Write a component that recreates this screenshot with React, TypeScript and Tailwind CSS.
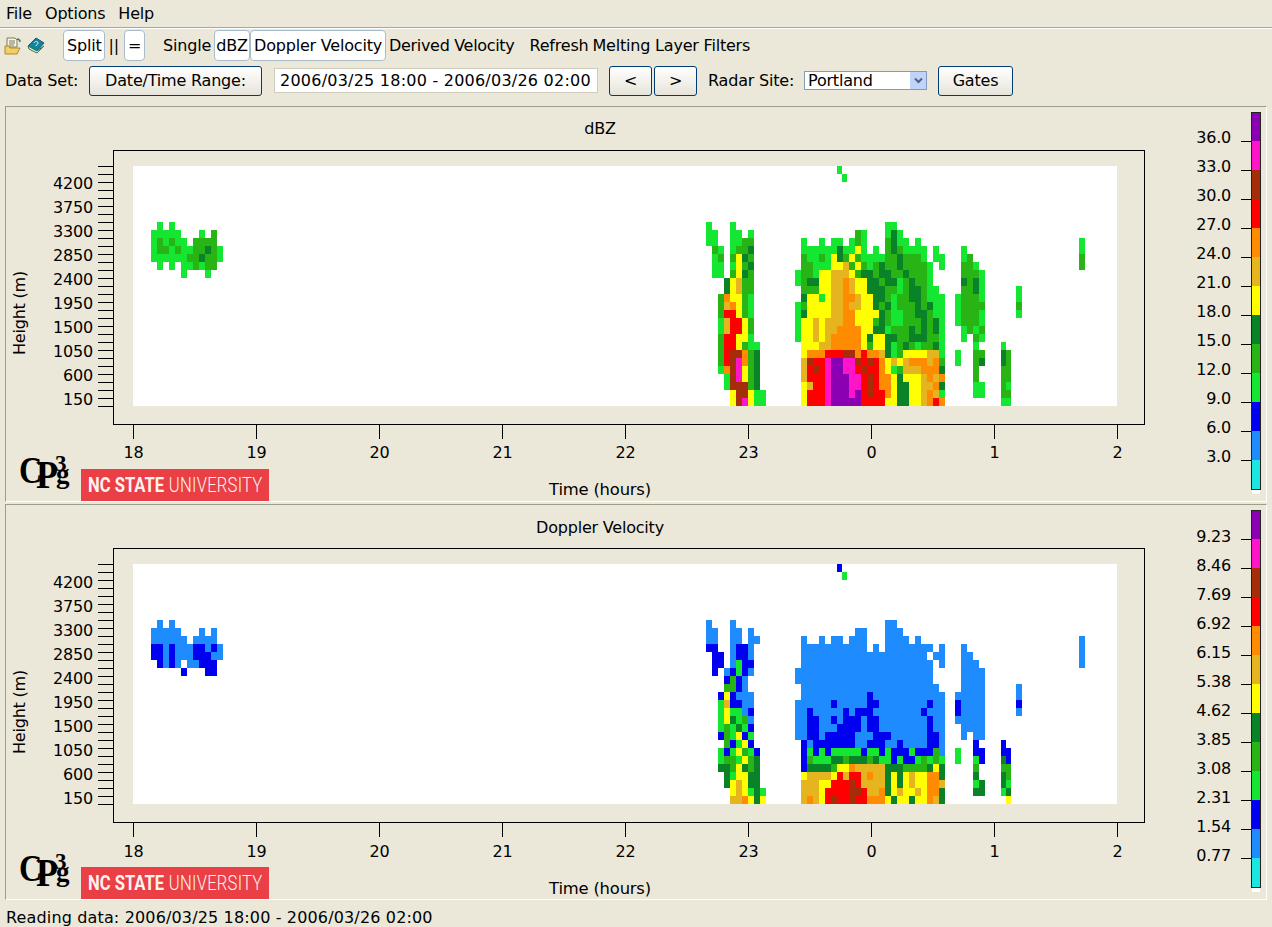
import React from "react";

const COLORS: Record<string, string> = {
  c: "#1ce6e0", b: "#1e8cff", B: "#0000f0", g: "#14e632", m: "#28b414", d: "#0a8228",
  y: "#ffff00", o: "#e6b41e", O: "#ff8c00", r: "#ff0000", R: "#a52d0a", p: "#ff14c8", v: "#8c00b4",
};
const BAR = ["v", "p", "R", "r", "O", "o", "y", "d", "m", "g", "B", "b", "c"];

type Cluster = { x: number; w: number; r: number; rows: string[] };

const DBZ: Cluster[] = [
  { x: 837, w: 5, r: 0, rows: ["g.", ".g"] },
  { x: 151, w: 6, r: 7, rows: [".g.g........", "ggggg...g.m.", "gmgmgg.mmmm.", "gmmgmggmmdmg", "ggggggmmdmmg", ".g.g.ggmgmm.", ".....g...g"] },
  { x: 706, w: 6, r: 7, rows: ["g...g.....", "gg..gg.g..", "gg..ggmm..", ".mg.gmmd", ".gm.mydm", ".gg.gymd", ".gg.mydm", "...dyomm", "...dyomm", "..mOyymg", "..moOymg", "..mrrymg", "..gorrym", "..gorrym", "..mrryyg", "..mrrymgg", "..mrRROmd", "..mrRpOmd", "..gORpymd", "...gRpymd", "...gRRRmd", "....yRRygg", "....yRpygg"] },
  { x: 795, w: 6, r: 7, rows: [
    "...............gg",
    "..........mg...gdg",
    ".g..g.gg.gmg...mdgg.g",
    ".ggggggdggyg.g.mdmgggg.g",
    ".mggmgydmymggggmmdmmmg.gg",
    ".mmgggyyomymgmdmmdmmmmg.g",
    "gmmgyyoooymddmddmmdmmmg",
    "gmddyyooOoyyddmddgmdmmg",
    ".mmmyyooOoyydddmmgmddmgg",
    ".dyygyooOOoyyddmgmmddmggg",
    "gmyyyyooOooyydmdgmmmdmdgg",
    "gdyyyyooOOyyyydmggmmddmgg",
    "gyyoyoooOOyyymdmggmmmdmdg",
    "gyyoyooOOOOyyddgmmmdmdmdg",
    "gyyoyoOOOOOydyyddmmdddmmg",
    ".yyyooOOOOOymyydgmdmgmmdg",
    ".yOOOrrrRROrOOodgmyyyyoog",
    ".oRrrpvvppRrRrOyoyoOOOoOm",
    ".orRrpvvpprRrrOygmoooOOOd",
    ".orrrpvvvpprRrOOydyyyoOoO",
    ".yorrpvvvpprRrOOyddyyooOd",
    ".yrrrpvvvpvrRrrOyddyyoOog",
    ".yrrrpvvvvvrrrryyddyyoOrO",
  ] },
  { x: 955, w: 6, r: 10, rows: [".g...", ".gm..", ".mmg.", ".mmmg", ".dmdg", ".mmdg", "gmmmg", "gmmmm", "gmmmg", "gmmmg", ".gmgm", ".g.mg", "...g.", "g..mm", "g..md", "...m.", "...m.", "...gg", "...gg"] },
  { x: 1001, w: 5, r: 22, rows: ["g.", "dm", "dm", "mm", "mm", "mg", "mm", "gg"] },
  { x: 1016, w: 6, r: 15, rows: ["g", "g", "m", "g"] },
  { x: 1079, w: 6, r: 9, rows: ["g", "g", "m", "m"] },
];

const VEL: Cluster[] = [
  { x: 837, w: 5, r: 0, rows: ["B.", ".g"] },
  { x: 151, w: 6, r: 7, rows: [".b.b........", "bbbbb...b.b.", "bbbbbb.bbbb.", "BBbBbbbBBbBb", "BBbBbbbBBBbb", ".BbBb.bbBBB.", ".....B...BB."] },
  { x: 706, w: 6, r: 7, rows: ["b...b.....", "bb..bb.b..", "bb..bb.bb.", "BB..bBBb", ".BB.bBBb", ".BB.bgBB", ".B.bBgBb", "...BmBb", "...mmBb", "..ByBbbb", "..goBBbb", "..gyggbB", "..gydgmb", "..gmgdgB", "..BmgyBg", "...mBgyB", "..gBgymgB", "..gmmgymd", "..ddmydmd", "...dgyydd", "...dyoydd", "....yoygdg", "....ooOydy"] },
  { x: 795, w: 6, r: 7, rows: [
    "...............bb",
    "..........bb...bbb",
    ".b..b.bb.bbb...bbbb.b",
    ".bbbbbbbbbbb.b.bbbbbbbb.b",
    ".bbbbbbbbbbbbbbbbbbbbb.bb",
    ".bbbbbbbbbbbbbbbbbbbbbb.b",
    "bbbbbbbbbbbbbbbbbbbbbbb",
    "bbbbbbbbbbbbbbbbbbbbbbb",
    ".bbbbbbbbbbbbbbbbbbbbbbb",
    ".bbbbbbbbbbbBbbbbbbbbbbbb",
    "bbbbbbBbbbbbBBbbbbbbbbBbb",
    "bbBbbbbbBbBBBbbbbbbbbBbbb",
    "bbBBbbBbBBBbBBbbbbbbbbBbb",
    "bbBBbbbBBBBbBBbbbbbbbbBbb",
    "bbBBbBBBBBbbbBBBbbbbbbBBb",
    ".BbBBBBBBBbbBBBbbBbbbbBBb",
    ".BgBgBgggggBggBgBBBgBBBmb",
    ".BmgggddmdddmdggBgBBgmgmg",
    ".BddddmyyOooooodddmmmmdyd",
    ".yooooyrorroOoodydyoyyOOd",
    ".oooyyrrrRroooodydyoyyOOo",
    ".oooyrrrrRRrooOdyoyyoyOOd",
    ".oOoyrRrrRrrOOOydyydyyOod",
  ] },
  { x: 955, w: 6, r: 10, rows: [".b...", ".bb..", ".bbb.", ".bbbb", ".bbbb", ".bbbb", "bbbbb", "Bbbbb", "Bbbbb", "bbbbb", ".bbbb", ".b.bb", "...B.", "g..BB", "g..gB", "...m.", "...d.", "...gd", "...dd"] },
  { x: 1001, w: 5, r: 22, rows: ["B.", "BB", "dB", "mm", "dm", "dg", "gd", ".y"] },
  { x: 1016, w: 6, r: 15, rows: ["b", "b", "B", "b"] },
  { x: 1079, w: 6, r: 9, rows: ["b", "b", "b", "b"] },
];

const HOURS = ["18", "19", "20", "21", "22", "23", "0", "1", "2"];
const HEIGHTS = ["4200", "3750", "3300", "2850", "2400", "1950", "1500", "1050", "600", "150"];
const FONT = "'DejaVu Sans', sans-serif";

function Radar({ clusters }: { clusters: Cluster[] }) {
  const cells: React.ReactNode[] = [];
  clusters.forEach((c, ci) =>
    c.rows.forEach((row, ri) => {
      let i = 0;
      while (i < row.length) {
        const ch = row[i];
        let j = i;
        while (j < row.length && row[j] === ch) j++;
        if (ch !== ".") {
          cells.push(
            <rect key={`${ci}-${ri}-${i}`} x={c.x + i * c.w} y={166 + (c.r + ri) * 8} width={(j - i) * c.w} height={8} fill={COLORS[ch]} />
          );
        }
        i = j;
      }
    })
  );
  return <g shapeRendering="crispEdges">{cells}</g>;
}

function Chart({ title, clusters, labels, dy }: { title: string; clusters: Cluster[]; labels: string[]; dy: number }) {
  const yTicks = Array.from({ length: 31 }, (_, k) => 166 + k * 8);
  return (
    <svg width={1260} height={394} viewBox="6 107 1260 394" className="block" fontFamily={FONT} fontSize={16} fill="#000">
      <text x={600} y={134 + dy} textAnchor="middle" fontSize={16}>{title}</text>
      <rect x={113.5} y={150.5} width={1031} height={274} fill="none" stroke="#000" />
      <rect x={133} y={166} width={984} height={240} fill="#fff" />
      <Radar clusters={clusters} />
      <g stroke="#000" shapeRendering="crispEdges">
        {yTicks.map((y) => <line key={y} x1={98} x2={113} y1={y + 0.5} y2={y + 0.5} />)}
        {HOURS.map((_, i) => <line key={i} x1={133.5 + i * 123} x2={133.5 + i * 123} y1={424} y2={439} />)}
        {labels.map((_, i) => <line key={i} x1={1241} x2={1252} y1={141.5 + i * 29} y2={141.5 + i * 29} />)}
      </g>
      {HEIGHTS.map((h, i) => <text key={h} x={93} y={188.5 + dy + i * 24} textAnchor="end">{h}</text>)}
      {HOURS.map((h, i) => <text key={h} x={133.5 + i * 123} y={458 + dy} textAnchor="middle">{h}</text>)}
      <text x={600} y={495 + dy} textAnchor="middle" fontSize={16.4}>Time (hours)</text>
      <text transform={`translate(25 ${313 + dy}) rotate(-90)`} textAnchor="middle" fontSize={16}>Height (m)</text>
      {labels.map((l, i) => <text key={l} x={1231} y={143 + dy + i * 29} textAnchor="end">{l}</text>)}
      <g shapeRendering="crispEdges">
        {BAR.map((k, i) => <rect key={k} x={1251} y={112 + i * 29} width={10} height={29} fill={COLORS[k]} />)}
        <rect x={1251.5} y={112.5} width={9} height={377} fill="none" stroke="#222" />
        <rect x={1252} y={490} width={8} height={4} fill="#fff" />
      </g>
    </svg>
  );
}

function Logos() {
  return (
    <div className="absolute left-[13px] top-[358px] flex items-end gap-[11px]">
      <div className="relative h-[36px] w-[51px] font-['Liberation_Serif',serif] font-bold text-black">
        <span className="absolute left-0 top-[-14px] w-[18px] origin-left scale-x-[0.85] text-[38px] leading-[38px]">C</span>
        <span className="absolute left-[17px] top-[-10px] origin-left scale-x-[0.9] text-[40px] leading-[40px]">P</span>
        <span className="absolute left-[36px] top-[-5px] text-[23px] leading-[8px]">3</span>
        <span className="absolute left-[37px] top-[3px] text-[27px] leading-[12px]">g</span>
      </div>
      <div className="flex h-[32px] w-[188px] items-center overflow-hidden bg-[#ea3f45] pl-[7px] text-[#fff3f0]">
        <div className="flex origin-left scale-x-[0.79] whitespace-nowrap font-['Roboto',sans-serif] text-[21px] tracking-normal leading-[32px]">
          <span className="font-bold">NC STATE</span>
          <span className="ml-[6px] font-light tracking-[0.3px]">UNIVERSITY</span>
        </div>
      </div>
    </div>
  );
}

function Panel({ title, clusters, labels, dy }: { title: string; clusters: Cluster[]; labels: string[]; dy: number }) {
  return (
    <section className="relative mx-[5px] h-[396px] w-[1262px] border border-[#9d9d8c] border-b-white border-r-white">
      <Chart title={title} clusters={clusters} labels={labels} dy={dy} />
      <Logos />
    </section>
  );
}

function Toggle({ children, on, w }: { children: React.ReactNode; on?: boolean; w?: string }) {
  const base = "flex h-[31px] items-center justify-center px-[3px]";
  return (
    <span className={`${base} ${on ? "rounded-[4px] border border-[#a9bccb] bg-white" : ""} ${w ?? ""}`}>
      {children}
    </span>
  );
}

function Btn({ children, w }: { children: React.ReactNode; w: string }) {
  return (
    <button className={`flex h-[30px] items-center justify-center rounded-[3px] border border-[#003c74] bg-gradient-to-b from-white to-[#e6e4da] ${w}`}>
      {children}
    </button>
  );
}

export default function App() {
  return (
    <div className="h-[927px] w-[1272px] overflow-hidden bg-[#ebe8d9] font-['DejaVu_Sans',sans-serif] text-[16px] tracking-[-0.2px] text-black">
      <nav className="flex h-[28px] items-center gap-[13px] border-b border-[#a8a898] pl-[6px] shadow-[0_1px_0_#fff]">
        <span>File</span><span>Options</span><span>Help</span>
      </nav>
      <div className="flex h-[33px] items-center pl-[4px] pt-[2px]">
        <svg width={18} height={18} viewBox="0 0 18 18" className="mt-[1px]">
          <path d="M3 1h8l2 2v7H3z" fill="#f4f4e8" stroke="#7c7a58" strokeWidth="1" />
          <path d="M5 4h6M5 6h6M5 8h5" stroke="#7c7a58" strokeWidth="1" />
          <path d="M13 2c2 0 3 1 3 3" fill="none" stroke="#4f7a4a" strokeWidth="1.5" />
          <path d="M1 9h4l1 2h10l-3 6H1z" fill="#f5cf63" stroke="#a78a30" strokeWidth="1" />
        </svg>
        <svg width={18} height={18} viewBox="0 0 18 18" className="ml-[5px]">
          <path d="M1 9 9 1l8 5-7 8z" fill="#12839e" stroke="#0b5d70" strokeWidth="1" />
          <path d="M1 9l1 3 8 4 7-7-7 5z" fill="#e8f0d0" stroke="#2c7a5a" strokeWidth="1" />
          <path d="M7 6c1-2 4-2 4 0s-2 1-2 3" fill="none" stroke="#dff4f4" strokeWidth="1" />
        </svg>
        <div className="ml-[18px] flex items-center">
          <Toggle on>Split</Toggle>
          <span className="ml-[1px] px-[2px]">||</span>
          <span className="ml-[3px]"><Toggle on>=</Toggle></span>
          <span className="ml-[15px]"><Toggle>Single</Toggle></span>
          <Toggle on w="w-[36px] px-0">dBZ</Toggle>
          <Toggle on>Doppler Velocity</Toggle>
          <span className="tracking-[-0.32px]"><Toggle>Derived Velocity</Toggle></span>
          <span className="ml-[9px]"><Toggle>Refresh</Toggle></span>
          <span className="-ml-[2px]"><Toggle>Melting Layer Filters</Toggle></span>
        </div>
      </div>
      <div className="flex h-[36px] items-center pl-[5px] pt-[3px]">
        <span className="w-[84px]">Data Set:</span>
        <Btn w="w-[173px]">Date/Time Range:</Btn>
        <span className="ml-[12px] flex h-[25px] w-[324px] items-center border border-[#cfccbc] bg-white pl-[5px] tracking-[0.23px]">2006/03/25 18:00 - 2006/03/26 02:00</span>
        <span className="ml-[11px]"><Btn w="w-[43px]">&lt;</Btn></span>
        <span className="ml-[2px]"><Btn w="w-[43px]">&gt;</Btn></span>
        <span className="ml-[11px] w-[96px]">Radar Site:</span>
        <span className="flex h-[19px] w-[123px] items-center justify-between border border-[#7f9db9] bg-white pl-[3px]">
          Portland
          <span className="flex h-[17px] w-[16px] items-center justify-center bg-[#c1d3fb]">
            <svg width={9} height={7} viewBox="0 0 9 7"><path d="M1 1.5 4.5 5 8 1.5" fill="none" stroke="#4d6185" strokeWidth="2" /></svg>
          </span>
        </span>
        <span className="ml-[11px]"><Btn w="w-[75px]">Gates</Btn></span>
      </div>
      <div className="mt-[9px] flex flex-col gap-[2px]">
        <Panel title="dBZ" clusters={DBZ} labels={["36.0", "33.0", "30.0", "27.0", "24.0", "21.0", "18.0", "15.0", "12.0", "9.0", "6.0", "3.0"]} dy={0} />
        <Panel title="Doppler Velocity" clusters={VEL} labels={["9.23", "8.46", "7.69", "6.92", "6.15", "5.38", "4.62", "3.85", "3.08", "2.31", "1.54", "0.77"]} dy={1} />
      </div>
      <div className="flex h-[27px] items-center pl-[6px] pt-[8px] tracking-[0.15px]">Reading data: 2006/03/25 18:00 - 2006/03/26 02:00</div>
    </div>
  );
}
